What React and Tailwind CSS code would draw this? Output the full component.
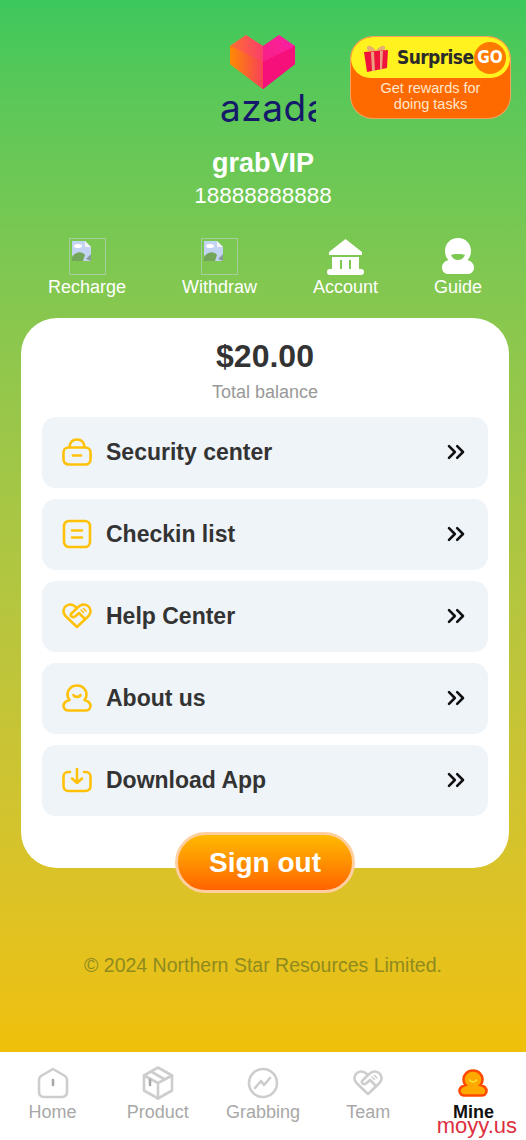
import { ChevronsRight } from 'lucide-react';

const font = { fontFamily: '"Liberation Sans", Arial, sans-serif' };

function Logo() {
  return (
    <div className="flex flex-col items-center">
      <svg width="68" height="56" viewBox="0 0 68 56">
        <defs>
          <linearGradient id="left" x1="0" y1="0" x2="1" y2="0">
            <stop offset="0" stopColor="#ff8a00" />
            <stop offset="1" stopColor="#f7405a" />
          </linearGradient>
          <linearGradient id="right" x1="0" y1="1" x2="1" y2="0">
            <stop offset="0" stopColor="#f0146e" />
            <stop offset="1" stopColor="#fb0fb4" />
          </linearGradient>
        </defs>
        <path d="M1 12 L17 1 L34 12 L34 55 L1 30 Z" fill="url(#left)" />
        <path d="M34 12 L50 1 L66 12 L66 30 L34 55 Z" fill="url(#right)" />
        <path d="M34 28 L66 12 L66 30 L34 55 Z" fill="#f5107a" />
        <path d="M34 28 L1 12 L1 30 L34 55 Z" fill="url(#left)" />
        <path d="M1 12 L17 1 L34 12 L50 1 L66 12 L34 28 Z" fill="#ff3c8c" opacity="0.35" />
      </svg>
      <div className="mt-[1px] h-[34px] w-[106px] overflow-hidden whitespace-nowrap pl-[10px] text-[37px] leading-[34px] tracking-[0.5px] text-[#15196a]" style={{ fontFamily: 'Inter, sans-serif' }}>
        azada
      </div>
    </div>
  );
}

function Gift() {
  return (
    <svg width="30" height="28" viewBox="0 0 30 28">
      <path d="M15 7 C10 0 5 1 6 5 C6 7 11 8 15 7 C19 8 24 7 24 5 C25 1 20 0 15 7 Z" fill="#e8b070" />
      <path d="M3 8 L27 6 L26 24 L6 28 Z" fill="#f0143c" />
      <path d="M10 8 L13 8 L14 27 L11 27 Z M19 7 L22 7 L21 25 L19 26 Z" fill="#eaa080" />
    </svg>
  );
}

function Surprise() {
  return (
    <div className="absolute left-[351px] top-[37px] h-[81px] w-[159px] overflow-hidden rounded-[22px] bg-[#ff6a00] ring-1 ring-[#f5a060]">
      <div className="flex h-[41px] items-center rounded-b-[20px] rounded-t-[22px] bg-[#fff21e] pl-[10px] pr-[4px]">
        <Gift />
        <span className="ml-[6px] text-[19px] font-bold tracking-[-0.6px] text-[#2b2b2b]" style={{ fontFamily: '"DejaVu Sans Condensed", "Liberation Sans", sans-serif' }}>Surprise</span>
        <span className="ml-auto flex h-[32px] w-[32px] items-center justify-center rounded-full bg-[#ff7a00] text-[17px] font-bold text-white" style={{ fontFamily: '"DejaVu Sans Condensed", sans-serif' }}>GO</span>
      </div>
      <p className="pt-[2px] text-center text-[14.5px] leading-[16px] text-[#ffe6cc]">Get rewards for<br />doing tasks</p>
    </div>
  );
}

function BrokenImage() {
  return (
    <div className="h-[37px] w-[37px] border border-[#a4cf9c] pl-[1px] pt-[1px]">
      <svg width="21" height="22" viewBox="0 0 21 22">
        <path d="M1 1 H14 L20 7 V21 H1 Z" fill="#c3d4f2" />
        <path d="M14 1 V7 H20 Z" fill="#f4f4f4" />
        <ellipse cx="7" cy="6" rx="4" ry="2" fill="#fff" />
        <path d="M1 21 V17 C5 11 11 11 14 15 L12 21 Z" fill="#74a65a" />
        <path d="M20 14 L15 19 L20 21 Z" fill="#8a9a98" />
      </svg>
    </div>
  );
}

function BankIcon() {
  return (
    <svg width="37" height="37" viewBox="0 0 37 37" fill="#fff">
      <path d="M18.5 1 L35 14 V17 H2 V14 Z" />
      <path d="M5 19 H32 V32 H5 Z M13 22 V31 H15 V22 Z M22 22 V31 H24 V22 Z" fillRule="evenodd" />
      <rect x="0" y="31" width="37" height="6" rx="3" />
    </svg>
  );
}

function GuideIcon() {
  return (
    <svg width="32" height="37" viewBox="0 0 32 37" fill="#fff">
      <path fillRule="evenodd" d="M16 0 C24 0 29 6 29 13 C29 17 27.5 20 25.5 22 C29 23 32 25.500 32 29.500 C32 33.500 29 36 26 36 H6 C3 36 0 33.500 0 29.500 C0 25.500 3 23 6.500 22 C4.500 20 3 17 3 13 C3 6 8 0 16 0 Z M9 17 C10 20 13 22 16 22 C19 22 22 20 23 17 C22 15.500 10 15.500 9 17 Z" />
    </svg>
  );
}

function QuickItem({ label, icon }) {
  return (
    <div className="flex flex-col items-center">
      <div className="flex h-[37px] items-center">{icon}</div>
      <span className="mt-[2px] text-[18px] leading-[21px] text-white">{label}</span>
    </div>
  );
}

const stroke = { fill: 'none', stroke: '#ffc107', strokeWidth: 2.6, strokeLinecap: 'round', strokeLinejoin: 'round' };

const LockIcon = () => (
  <svg width="30" height="28" viewBox="0 0 30 28" {...stroke}>
    <rect x="1.500" y="9.500" width="27" height="17" rx="5" />
    <path d="M7.500 9 C8 4 11 1.500 15 1.500 C19 1.500 22 4 22.500 9" />
    <path d="M11 17.500 H19" />
  </svg>
);
const ListIcon = () => (
  <svg width="30" height="30" viewBox="0 0 30 30" {...stroke}>
    <rect x="2" y="2" width="26" height="26" rx="5" />
    <path d="M10 11.500 H20 M10 18.500 H20" />
  </svg>
);
const HeartIcon = ({ color = '#ffc107' }) => (
  <svg width="30" height="26" viewBox="0 0 30 26" {...stroke} stroke={color}>
    <path d="M15 24 L3.500 13 C0.500 10 1 5 4 3 C7.500 0.500 11.500 1.500 15 5 C18.500 1.500 22.500 0.500 26 3 C29 5 29.500 10 26.500 13 Z" />
    <path d="M15 5 L9 11 C8 13 11 15 13 13.500 L17 10 L22 15" />
    <path d="M19 7 L21.500 9.500 M21.500 5.500 L24 8" strokeWidth="1.600" />
  </svg>
);
const DuckIcon = () => (
  <svg width="30" height="28" viewBox="0 0 30 28" {...stroke}>
    <path d="M15 1.500 C21 1.500 24.500 6 24.500 10.500 C24.500 13 23.500 15 22.500 16 C26 17 28.500 19 28.500 22 C28.500 25 26 26.500 23.500 26.500 H6.500 C4 26.500 1.500 25 1.500 22 C1.500 19 4 17 7.500 16 C6.500 15 5.500 13 5.500 10.500 C5.500 6 9 1.500 15 1.500 Z" />
    <path d="M11.500 11 C12.500 13.500 17.500 13.500 18.500 11" />
  </svg>
);
const DownloadIcon = () => (
  <svg width="30" height="26" viewBox="0 0 30 26" {...stroke}>
    <path d="M8 5 H6 C3.500 5 1.500 7 1.500 9.500 V19 C1.500 22 3.500 24 6.500 24 H23.500 C26.500 24 28.500 22 28.500 19 V9.500 C28.500 7 26.500 5 24 5 H22" />
    <path d="M15 2 V15 M10 11.500 L15 16 L20 11.500" />
  </svg>
);

function MenuRow({ icon, label }) {
  return (
    <div className="flex h-[70.500px] items-center rounded-[14px] bg-[#eff4f9] pl-[20px] pr-[18px]">
      <div className="flex w-[30px] justify-center">{icon}</div>
      <span className="ml-[14px] flex-1 text-[23px] font-bold text-[#333]">{label}</span>
      <ChevronsRight size={28} strokeWidth={2.2} color="#111" />
    </div>
  );
}

const grayStroke = { fill: 'none', stroke: '#cdcdcd', strokeWidth: 2.6, strokeLinecap: 'round', strokeLinejoin: 'round' };

const NavHome = () => (
  <svg width="32" height="32" viewBox="0 0 32 32" {...grayStroke}>
    <path d="M16 2 L28 9 C29.500 10 30 11 30 13 V25 C30 28 28 30 25 30 H7 C4 30 2 28 2 25 V13 C2 11 2.500 10 4 9 Z" />
    <path d="M16 13 V18" stroke="#a8a8a8" />
  </svg>
);
const NavBox = () => (
  <svg width="32" height="34" viewBox="0 0 32 34" {...grayStroke}>
    <path d="M16 1.500 L30 9.500 V24.500 L16 32.500 L2 24.500 V9.500 Z" />
    <path d="M2 9.500 L16 17 L30 9.500 M16 17 V32.500 M9 5.500 L23 13.500" />
    <path d="M8 14 V19" stroke="#a8a8a8" />
  </svg>
);
const NavChart = () => (
  <svg width="32" height="32" viewBox="0 0 32 32" {...grayStroke}>
    <circle cx="16" cy="16" r="14" />
    <path d="M8 21 L14 14 L17 18 L23 11" />
  </svg>
);
const NavDuck = () => (
  <svg width="30" height="30" viewBox="0 0 30 28">
    <path d="M15 1.500 C21 1.500 24.500 6 24.500 10.500 C24.500 13 23.500 15 22.500 16 C26 17 28.500 19 28.500 22 C28.500 25 26 26.500 23.500 26.500 H6.500 C4 26.500 1.500 25 1.500 22 C1.500 19 4 17 7.500 16 C6.500 15 5.500 13 5.500 10.500 C5.500 6 9 1.500 15 1.500 Z" fill="#ffa800" stroke="#ff4a00" strokeWidth="2.600" />
    <path d="M11.500 11 C12.500 13.500 17.500 13.500 18.500 11" fill="none" stroke="#ffe030" strokeWidth="1.800" strokeLinecap="round" />
  </svg>
);

function NavItem({ icon, label, active }) {
  return (
    <div className="flex flex-1 flex-col items-center">
      <div className="flex h-[34px] items-center">{icon}</div>
      <span className={active ? 'mt-[2px] text-[18px] font-bold leading-[21px] text-[#111]' : 'mt-[2px] text-[18px] leading-[21px] text-[#a8a8a8]'}>{label}</span>
    </div>
  );
}

export default function App() {
  return (
    <div className="relative flex h-[1140px] w-[526px] flex-col overflow-hidden" style={font}>
      <div className="relative flex flex-1 flex-col bg-gradient-to-b from-[#3cc85c] to-[#f0c008]">
        <div className="flex flex-col items-center pt-[34px]">
          <Logo />
          <h1 className="mt-[21px] text-[27px] font-bold leading-[34px] text-white">grabVIP</h1>
          <p className="mt-[1px] text-[22.500px] leading-[30px] text-white">18888888888</p>
        </div>
        <Surprise />

        <div className="mt-[27px] flex justify-between pl-[48px] pr-[44px]">
          <QuickItem label="Recharge" icon={<BrokenImage />} />
          <QuickItem label="Withdraw" icon={<BrokenImage />} />
          <QuickItem label="Account" icon={<BankIcon />} />
          <QuickItem label="Guide" icon={<GuideIcon />} />
        </div>

        <div className="mx-[21px] mt-[20px] h-[550px] w-[488px] rounded-[36px] bg-white px-[21px] pt-[18px]">
          <p className="text-center text-[32px] font-bold leading-[40px] text-[#333]">$20.00</p>
          <p className="mt-[5px] text-center text-[18px] leading-[22px] text-[#999]">Total balance</p>
          <div className="mt-[14px] flex flex-col gap-[11.500px]">
            <MenuRow icon={<LockIcon />} label="Security center" />
            <MenuRow icon={<ListIcon />} label="Checkin list" />
            <MenuRow icon={<HeartIcon />} label="Help Center" />
            <MenuRow icon={<DuckIcon />} label="About us" />
            <MenuRow icon={<DownloadIcon />} label="Download App" />
          </div>
        </div>

        <button className="mx-auto -mt-[36px] h-[61px] w-[180px] translate-x-[2px] rounded-full border-[3px] border-[#ffcfa0] bg-gradient-to-b from-[#ffb900] to-[#ff6200] text-[28px] font-bold text-white">
          Sign out
        </button>

        <p className="mt-[60px] text-center text-[19.500px] leading-[24px] text-[#8f8a1e]">© 2024 Northern Star Resources Limited.</p>
      </div>

      <nav className="flex h-[88px] bg-white px-0 pt-[14px]">
        <NavItem icon={<NavHome />} label="Home" />
        <NavItem icon={<NavBox />} label="Product" />
        <NavItem icon={<NavChart />} label="Grabbing" />
        <NavItem icon={<HeartIcon color="#cdcdcd" />} label="Team" />
        <NavItem icon={<NavDuck />} label="Mine" active />
      </nav>
      <span className="absolute bottom-[2px] right-[9px] text-[22px] leading-[24px] text-[#dc3040]">moyy.us</span>
    </div>
  );
}
